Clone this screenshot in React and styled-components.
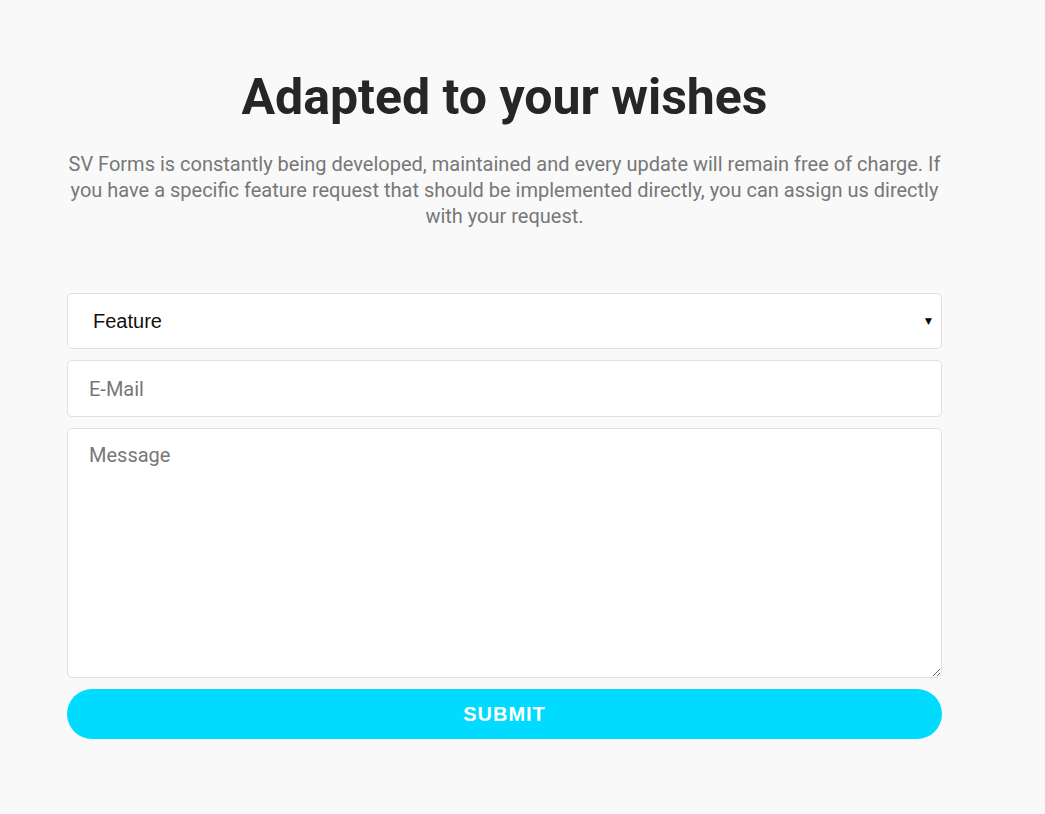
import styled, { createGlobalStyle } from 'styled-components';

const GlobalStyle = createGlobalStyle`
    html, body {
        margin: 0;
        background: #f9f9f9;
    }
    * {
        box-sizing: border-box;
    }
`

export default function App() {
    return (
        <Page>
            <GlobalStyle />
            <Section>
                <Title>Adapted to your wishes</Title>
                <Intro>
                    SV Forms is constantly being developed, maintained and every update will remain free of charge. If you have a specific feature request that should be implemented directly, you can assign us directly with your request.
                </Intro>
                <Form onSubmit={(e) => e.preventDefault()}>
                    <SelectWrap>
                        <Select defaultValue="feature">
                            <option value="feature">Feature</option>
                            <option value="bug">Bug</option>
                        </Select>
                        <Arrow>▼</Arrow>
                    </SelectWrap>
                    <Input type="email" placeholder="E-Mail" />
                    <TextArea placeholder="Message" />
                    <Button type="submit">Submit</Button>
                </Form>
            </Section>
        </Page>
    )
}

const Page = styled.main`
    min-height: 814px;
    padding: 67px 0 0 67px;
    background: #f9f9f9;
`

const Section = styled.section`
    width: 875px;
    display: flex;
    flex-direction: column;
    align-items: center;
`

const Title = styled.h1`
    margin: 0;
    font-family: Roboto, "Liberation Sans", sans-serif;
    font-weight: 700;
    font-size: 50px;
    line-height: 60px;
    color: #262626;
`

const Intro = styled.p`
    margin: 24px 0 0;
    font-family: Roboto, "Liberation Sans", sans-serif;
    font-size: 20px;
    line-height: 26px;
    color: #777;
    text-align: center;
`

const Form = styled.form`
    width: 100%;
    margin-top: 64px;
    display: flex;
    flex-direction: column;
    gap: 11px;
`

const SelectWrap = styled.div`
    position: relative;
`

const fieldBase = `
    width: 100%;
    background: #fff;
    border: 1px solid #e1e1e1;
    border-radius: 5px;
    font-size: 20px;
    outline: none;
`

const Select = styled.select`
    ${fieldBase}
    display: block;
    height: 56px;
    padding: 0 0 0 25px;
    appearance: none;
    font-family: "Liberation Sans", Arial, sans-serif;
    color: #111;
`

const Arrow = styled.span`
    position: absolute;
    right: 10px;
    top: 50%;
    transform: translateY(-50%);
    font-family: "DejaVu Sans", sans-serif;
    font-size: 9px;
    color: #000;
    pointer-events: none;
`

const Input = styled.input`
    ${fieldBase}
    height: 57px;
    padding: 0 21px;
    font-family: Roboto, sans-serif;
    color: #333;
    &::placeholder {
        color: #777;
    }
`

const TextArea = styled.textarea`
    ${fieldBase}
    height: 250px;
    padding: 14px 21px;
    font-family: Roboto, sans-serif;
    color: #333;
    &::placeholder {
        color: #777;
    }
`

const Button = styled.button`
    height: 50px;
    border: none;
    border-radius: 25px;
    background: #00dbff;
    color: #fff;
    font-family: "Liberation Sans", Arial, sans-serif;
    font-weight: 700;
    font-size: 20px;
    letter-spacing: 1px;
    text-transform: uppercase;
    cursor: pointer;
`
